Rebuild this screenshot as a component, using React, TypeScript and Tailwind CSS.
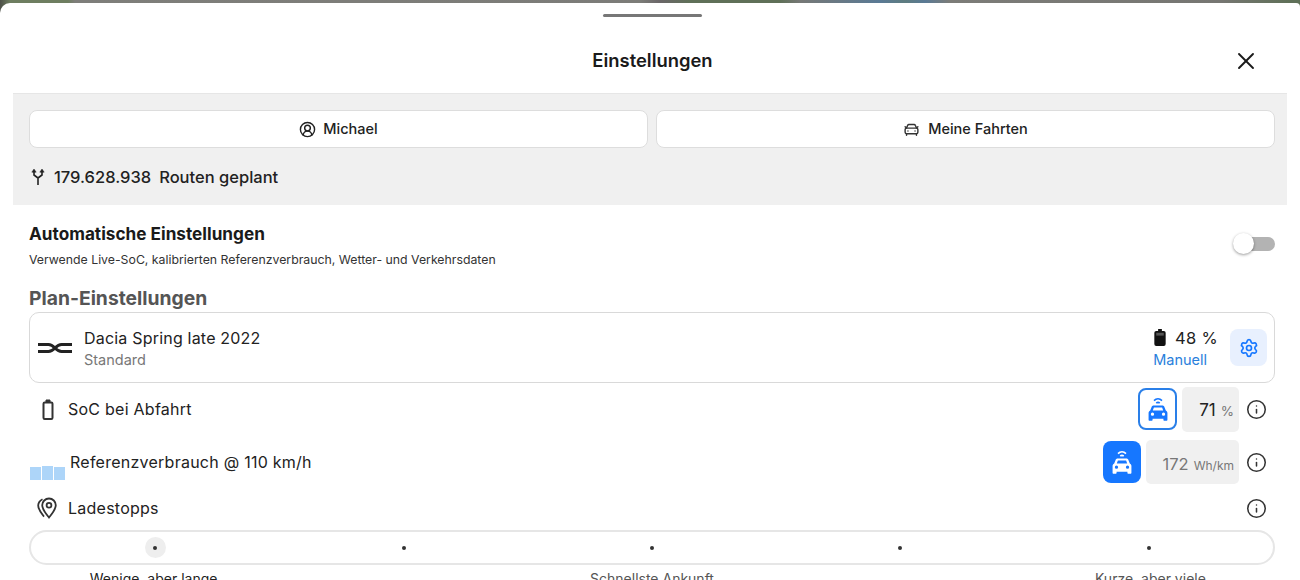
import React from "react";
import { X, CircleUserRound, CarFront, Settings, Info } from "lucide-react";

function CarWifi({ className }: { className?: string }) {
  return (
    <svg viewBox="0 0 24 24" className={className} fill="currentColor">
      <path d="M7.8 3.6a6.2 6.2 0 0 1 8.400 0l-1 1.200a4.700 4.700 0 0 0-6.400 0z" />
      <path d="M9.900 6a3.200 3.200 0 0 1 4.200 0l-1 1.200a1.700 1.700 0 0 0-2.200 0z" />
      <path fillRule="evenodd" d="M8 8.800h8c.9 0 1.600.5 1.900 1.300l1.300 3.200c.9.500 1.500 1.400 1.500 2.400V22c0 .5-.4.900-.9.900h-1.900c-.5 0-.9-.4-.9-.9v-1H7v1c0 .5-.4.900-.9.900H4.200c-.5 0-.9-.4-.9-.9v-6.300c0-1 .6-1.900 1.500-2.400l1.300-3.200C6.400 9.300 7.100 8.800 8 8.800zm.2 1.900-1 2.700h9.600l-1-2.700zM6.900 15.300a1.500 1.500 0 1 0 0 3 1.500 1.500 0 0 0 0-3zm10.200 0a1.500 1.500 0 1 0 0 3 1.500 1.500 0 0 0 0-3z" />
    </svg>
  );
}

function DaciaLogo() {
  return (
    <svg viewBox="0 0 34 10" className="w-[34px] h-[10px]" fill="none" stroke="#222">
      <path d="M0 1.500h10.500c2.800 0 4.500 1.500 6.500 3.500-2 2-3.700 3.500-6.500 3.500H0" strokeWidth="3" />
      <path d="M34 1.500H23.500c-2.800 0-4.500 1.500-6.500 3.500 2 2 3.700 3.500 6.500 3.500H34" strokeWidth="3" />
    </svg>
  );
}

function PinIcon() {
  return (
    <svg viewBox="0 0 20 22" className="w-[20px] h-[22px] ml-[8px]" fill="none" stroke="#333" strokeWidth="1.8">
      <path d="M12 1.500a6.800 6.800 0 0 1 6.800 6.800c0 4.200-4 8.700-6.800 12.200-2.800-3.500-6.800-8-6.800-12.200A6.800 6.800 0 0 1 12 1.500z" />
      <circle cx="12" cy="8.300" r="2.400" />
      <path d="M5.500 2.200C3 3.500 1.200 5.700 1.200 8.600c0 4 3.300 7.800 5.800 11" />
    </svg>
  );
}

function Stop({ active }: { active?: boolean }) {
  return (
    <div className={`flex items-center justify-center w-[21px] h-[21px] rounded-full ${active ? "bg-[#eeeeee]" : ""}`}>
      <div className="w-[4px] h-[4px] rounded-full bg-[#333333]" />
    </div>
  );
}

export default function App() {
  return (
    <div className="w-[1300px] h-[580px] overflow-hidden bg-[linear-gradient(90deg,#4d5048_0,#6e7e60_10px,#6e7e60_68px,#7e7e7a_75px,#7c7c78_640px,#6a6668_660px,#5f7058_690px,#5f7058_780px,#767876_800px,#5a7a95_880px,#5e7c80_905px,#5a7a95_925px,#7c7c78_950px,#767672_1220px,#5f7058_1290px)] font-['Inter',sans-serif] text-[#222222]">
      <div className="mt-[3px] h-[577px] rounded-tl-[10px] rounded-tr-[4px] bg-white flex flex-col overflow-hidden">
        <div className="flex justify-center pt-[11px] pl-[5px]">
          <div className="w-[99px] h-[3px] rounded-full bg-[#777777]" />
        </div>
        <div className="relative h-[77px] flex items-center justify-center shrink-0 -mt-[1px] pt-[13px] pl-[5px]">
          <span className="text-[18.400px] font-semibold text-[#1a1a1a]">Einstellungen</span>
          <X className="absolute right-[40px] top-[31px] w-[28px] h-[28px] text-[#1a1a1a]" strokeWidth={1.6} />
        </div>
        <div className="mx-[13px] h-[112px] shrink-0 bg-[#f0f0f0] border-t border-[#e6e6e6] pl-[16px] pr-[12px] pt-[16px]">
          <div className="flex gap-[8px]">
            <div className="flex-1 h-[38px] bg-white rounded-[8px] border border-[#dddddd] flex items-center justify-center gap-[7px] text-[14.500px] font-medium">
              <CircleUserRound className="w-[17px] h-[17px]" strokeWidth={2} />
              Michael
            </div>
            <div className="flex-1 h-[38px] bg-white rounded-[8px] border border-[#dddddd] flex items-center justify-center gap-[8px] text-[14.500px] font-medium">
              <CarFront className="w-[17px] h-[17px] text-[#333333]" strokeWidth={2} />
              Meine Fahrten
            </div>
          </div>
          <div className="flex items-center mt-[18px] h-[22px] text-[16.500px] font-medium">
            <svg viewBox="0 0 14 18" className="w-[14px] h-[18px] ml-[2px] mr-[9px]" fill="none" stroke="#222" strokeWidth="1.6">
              <path d="M7 17V10M7 10 3 7V3M7 10l4-3V3" />
              <path d="M.8 4.200 3 1l2.200 3.200zM8.800 4.200 11 1l2.200 3.200z" fill="#222" strokeWidth="0.5" />
            </svg>
            <span>179.628.938</span>
            <span className="ml-[8px]">Routen geplant</span>
          </div>
        </div>
        <div className="pl-[29px] pr-[25px] flex flex-col">
          <div className="flex justify-between items-start pt-[19px]">
            <div>
              <div className="text-[17.200px] leading-[20px] font-bold text-[#1a1a1a]">Automatische Einstellungen</div>
              <div className="text-[12.300px] leading-[16px] mt-[8px] text-[#333333]">Verwende Live-SoC, kalibrierten Referenzverbrauch, Wetter- und Verkehrsdaten</div>
            </div>
            <div className="relative w-[42px] h-[21px] mt-[9px]">
              <div className="absolute left-[2px] right-0 top-[4px] h-[14px] rounded-full bg-[#b3b3b3]" />
              <div className="absolute left-0 top-0 w-[21px] h-[21px] rounded-full bg-white shadow-[0_1px_3px_rgba(0,0,0,0.4)]" />
            </div>
          </div>
          <div className="text-[19.300px] leading-[24px] font-bold text-[#555555] mt-[18px]">Plan-Einstellungen</div>
          <div className="mt-[2px] h-[71px] rounded-[10px] border border-[#d9d9d9] flex items-center pl-[8px] pr-[7px]">
            <DaciaLogo />
            <div className="ml-[12px] mt-[1px]">
              <div className="text-[16px] leading-[22px] tracking-[0.2px] text-[#222222]">Dacia Spring late 2022</div>
              <div className="text-[14.500px] leading-[20px] mt-[1px] text-[#777777]">Standard</div>
            </div>
            <div className="ml-auto flex flex-col items-end mr-[12px] mt-[1px]">
              <div className="flex items-center text-[16.500px] leading-[22px] tracking-[0.3px]">
                <svg viewBox="0 0 12 18" className="w-[12px] h-[17px] mr-[9px]" fill="#111">
                  <path d="M4 0h4v2h2a2 2 0 0 1 2 2v12a2 2 0 0 1-2 2H2a2 2 0 0 1-2-2V4a2 2 0 0 1 2-2h2z" />
                  <rect x="2" y="4" width="8" height="3" fill="#555" />
                </svg>
                48 %
              </div>
              <div className="text-[14.500px] leading-[20px] mt-[1px] text-[#2a7fdc] mr-[11px]">Manuell</div>
            </div>
            <div className="w-[37px] h-[37px] rounded-[8px] bg-[#e8f0fe] flex items-center justify-center">
              <Settings className="w-[20px] h-[20px] text-[#1677ff]" strokeWidth={2} />
            </div>
          </div>
          <div className="flex items-center h-[46px] mt-[3px]">
            <svg viewBox="0 0 12 21" className="w-[12px] h-[21px] ml-[13px]" fill="none" stroke="#333" strokeWidth="2">
              <rect x="1.500" y="3.500" width="9" height="16.500" rx="1.200" />
              <path d="M4 1h4v2H4z" fill="#333" strokeWidth="1" />
            </svg>
            <span className="ml-[14px] text-[16px] tracking-[0.25px]">SoC bei Abfahrt</span>
            <div className="ml-auto w-[39px] h-[42px] rounded-[8px] border-2 border-[#2a7fe8] flex items-center justify-center text-[#1677ff]">
              <CarWifi className="w-[26px] h-[26px]" />
            </div>
            <div className="ml-[5px] w-[57px] h-[45px] rounded-[5px] bg-[#f0f0f0] flex items-baseline justify-end pr-[5px] pt-[11px]">
              <span className="text-[17px]">71</span>
              <span className="ml-[5px] text-[13.500px] text-[#777777]">%</span>
            </div>
            <Info className="ml-[7px] mr-[8px] w-[21px] h-[21px] text-[#333333]" strokeWidth={1.75} />
          </div>
          <div className="flex items-center h-[46px] mt-[7px]">
            <div className="flex items-end w-[35px] ml-[1px] mt-[21px] self-center">
              <div className="w-[11px] h-[13px] bg-[#add5f9]" />
              <div className="w-[11px] h-[14px] ml-[1px] bg-[#add5f9]" />
              <div className="w-[11px] h-[13px] ml-[1px] bg-[#add5f9]" />
            </div>
            <span className="ml-[5px] text-[16px] tracking-[0.25px] -mt-[1px]">Referenzverbrauch @ 110 km/h</span>
            <div className="ml-auto w-[38px] h-[42px] rounded-[8px] bg-[#1677ff] flex items-center justify-center text-white">
              <CarWifi className="w-[26px] h-[26px]" />
            </div>
            <div className="ml-[5px] w-[93px] h-[44px] rounded-[5px] bg-[#f0f0f0] flex items-baseline justify-end pr-[5px] pt-[12px]">
              <span className="text-[16.500px] text-[#777777]">172</span>
              <span className="ml-[5px] text-[12px] text-[#777777]">Wh/km</span>
            </div>
            <Info className="ml-[7px] mr-[8px] w-[21px] h-[21px] text-[#333333]" strokeWidth={1.75} />
          </div>
          <div className="flex items-center h-[40px] mt-[3px]">
            <PinIcon />
            <span className="ml-[11px] text-[16px] tracking-[0.25px]">Ladestopps</span>
            <Info className="ml-auto mr-[8px] w-[21px] h-[21px] text-[#333333]" strokeWidth={1.75} />
          </div>
          <div className="mt-[2px] h-[35px] rounded-full border-2 border-[#e6e6e6] grid grid-cols-5 items-center">
            {[0, 1, 2, 3, 4].map((i) => (
              <div key={i} className="flex justify-center"><Stop active={i === 0} /></div>
            ))}
          </div>
          <div className="grid grid-cols-5 mt-[5px] text-[14px] leading-[18px] text-center">
            <span>Wenige, aber lange</span>
            <span />
            <span className="text-[#555555]">Schnellste Ankunft</span>
            <span />
            <span className="text-[#555555]">Kurze, aber viele</span>
          </div>
        </div>
      </div>
    </div>
  );
}
